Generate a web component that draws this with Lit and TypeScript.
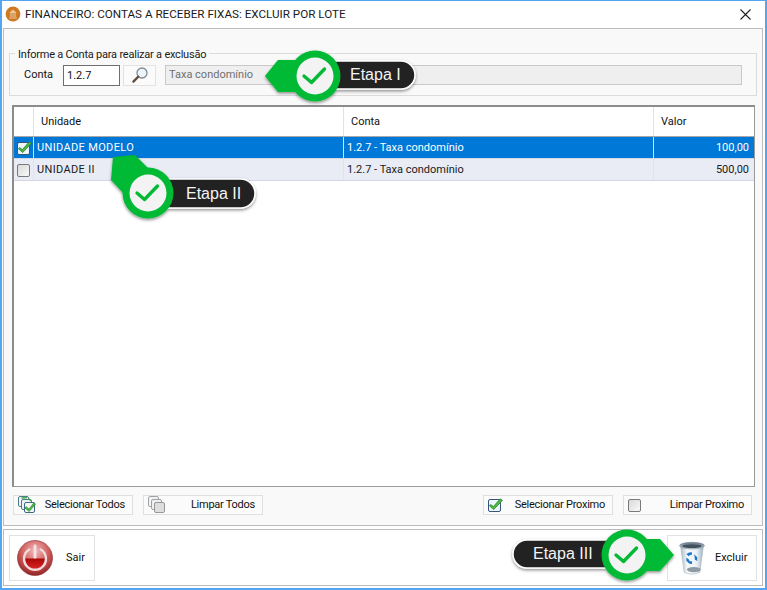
import { LitElement, html, css, svg } from "lit";
import { customElement } from "lit/decorators.js";

const checkIcon = (checked: boolean) => html`<svg class="cb" width="16" height="16" viewBox="0 0 16 16">
  <defs><linearGradient id="cbg" x1="0" y1="0" x2="1" y2="1"><stop offset="0" stop-color="#d8d8d8"/><stop offset="1" stop-color="#fafafa"/></linearGradient></defs>
  <rect x="1.5" y="2.5" width="12" height="12" rx="1.5" fill="${checked ? "#eef5fb" : "url(#cbg)"}" stroke="${checked ? "#34557c" : "#77797c"}"/>
  ${checked ? svg`<path d="M3.6 7.5 L6.4 9.6 L13.2 1.8 L15.4 3.4 L6.7 12.6 L2.4 8.8 Z" fill="#4fb83f" stroke="#1e7a22" stroke-width=".7"/>` : ""}
</svg>`;

const stackIcon = (checked: boolean) => html`<svg width="18" height="18" viewBox="0 0 18 18">
  <rect x="0.5" y="0.5" width="10" height="10" rx="1.5" fill="#f1f4f6" stroke="${checked ? "#4b7b91" : "#a2a2a2"}"/>
  <rect x="3.5" y="3.5" width="10" height="10" rx="1.5" fill="#eef1f3" stroke="${checked ? "#4b7b91" : "#a2a2a2"}"/>
  <rect x="6.5" y="6.5" width="10" height="10" rx="1.5" fill="${checked ? "#f4f8fb" : "#dedede"}" stroke="${checked ? "#3e6a85" : "#969696"}"/>
  ${checked ? svg`
    <path d="M8 10.5 L11 13 L16 6.6 L17.6 8 L11.2 15.6 L6.8 12 Z" fill="#4fb83f" stroke="#1e7a22" stroke-width=".5"/>
    <path d="M3.5 2 L9 1.6 M10.5 2.4 L13 4.8" stroke="#3da639" stroke-width="1.4" fill="none"/>` : ""}
</svg>`;

const powerIcon = html`<svg width="36" height="36" viewBox="0 0 36 36">
  <defs>
    <radialGradient id="pw" cx=".5" cy=".3" r=".8"><stop offset="0" stop-color="#f3bcbc"/><stop offset=".5" stop-color="#cf5a5a"/><stop offset="1" stop-color="#7c1414"/></radialGradient>
    <linearGradient id="pwb" x1="0" y1="0" x2="0" y2="1"><stop offset="0" stop-color="#a80808"/><stop offset="1" stop-color="#e42a2a"/></linearGradient>
  </defs>
  <circle cx="18" cy="18" r="17.5" fill="url(#pw)" stroke="#8b2a2a" stroke-width=".6"/>
  <path d="M5.6 18.5 H30.4 A12.4 12.4 0 0 1 5.6 18.5 Z" fill="url(#pwb)"/>
  <path d="M12.2 9.4 A11 11 0 1 0 23.8 9.4" fill="none" stroke="#efdcdc" stroke-width="2.4" stroke-linecap="round"/>
  <rect x="16.6" y="4.6" width="2.8" height="14" rx="1.4" fill="#f1e4e4"/>
</svg>`;

const trashIcon = html`<svg width="28" height="35" viewBox="0 0 30 38">
  <defs>
    <linearGradient id="tb" x1="0" y1="0" x2="1" y2="0"><stop offset="0" stop-color="#a9bac8"/><stop offset=".3" stop-color="#f5f9fb"/><stop offset=".7" stop-color="#eaf1f6"/><stop offset="1" stop-color="#9db0bf"/></linearGradient>
    <linearGradient id="tr" x1="0" y1="0" x2="0" y2="1"><stop offset="0" stop-color="#5c6d7b"/><stop offset="1" stop-color="#c9d5de"/></linearGradient>
  </defs>
  <path d="M2.5 5 L6.5 34 Q15 38 23.5 34 L27.5 5 Z" fill="url(#tb)" stroke="#a3b3c0" stroke-width=".6"/>
  <ellipse cx="15" cy="5" rx="13.5" ry="3.6" fill="url(#tr)" stroke="#7c8f9e" stroke-width=".7"/>
  <ellipse cx="15" cy="5.6" rx="10.5" ry="2" fill="#40505c"/>
  <ellipse cx="17" cy="31" rx="7.5" ry="2.8" fill="#8f9aa3"/>
  <path d="M9 14 A7 7 0 0 1 15 12.4 L15 15 A4 4 0 0 0 11.4 16.6 Z M17.4 14.4 L20.6 17.6 L20.6 21.6 L18 20 L18 17.8 Z M12.4 24.8 L9 21.6 L8.8 18.2 L11.2 19.6 L12.6 22 L15 22 L15 25 Z" fill="#1f74c9"/>
</svg>`;

const searchIcon = html`<svg width="18" height="18" viewBox="0 0 18 18">
  <circle cx="11" cy="7" r="5" fill="#eef5fa" stroke="#7f8c96" stroke-width="1.3"/>
  <path d="M7.2 10.8 L2.4 15.6" stroke="#5d4a3a" stroke-width="2.3" stroke-linecap="round"/>
</svg>`;

const appIcon = html`<svg width="16" height="16" viewBox="0 0 16 16">
  <circle cx="8" cy="8" r="7.4" fill="#cf7a22"/>
  <path d="M4.8 6.6 L8 3.6 L11.2 6.6 V7.4 H4.8 Z M5.4 8 H10.6 V11 H5.4 Z M4.2 11.4 H11.8 V12.6 H4.2 Z" fill="#ecc79c"/>
  <path d="M7 8 V11 M9 8 V11" stroke="#b96d1e" stroke-width=".8"/>
</svg>`;

@customElement("app-callout")
class AppCallout extends LitElement {
  static properties = { label: {}, kind: {} };
  label = "";
  kind = "i";
  static styles = css`
    :host { position: absolute; display: block; left: 0; top: 0; width: 767px; height: 590px; pointer-events: none; }
    svg { position: absolute; left: 0; top: 0; }
    .t { position: absolute; font: 16px "Liberation Sans", sans-serif; color: #f4f4f4; line-height: 20px; white-space: nowrap; }
    .i { left: 350px; top: 65px; }
    .ii { left: 186px; top: 184px; }
    .iii { left: 533px; top: 544px; }
  `;
  render() {
    const spec: Record<string, { pill: number[]; c: number[]; arrow: string }> = {
      i: { pill: [300, 61, 115, 28], c: [315, 76], arrow: "265,76 278,60 310,60 310,92 278,92" },
      ii: { pill: [140, 179, 115, 29], c: [148, 193], arrow: "113,157 135,155 160,180 125,195 111,180" },
      iii: { pill: [513, 540, 115, 28], c: [627, 555], arrow: "674,555 660,539 625,539 625,571 660,571" },
    };
    const s = spec[this.kind];
    const [x, y, w, h] = s.pill;
    const [cx, cy] = s.c;
    return html`<svg width="767" height="590" viewBox="0 0 767 590">
      <defs><filter id="sh" x="-20%" y="-30%" width="140%" height="170%"><feDropShadow dx="0" dy="1.5" stdDeviation="1.5" flood-color="#000" flood-opacity=".45"/></filter></defs>
      <g filter="url(#sh)">
        <rect x="${x}" y="${y}" width="${w}" height="${h}" rx="${h / 2}" fill="#232323" stroke="#fff" stroke-width="1.5"/>
        <polygon points="${s.arrow}" fill="#04b934"/>
        <circle cx="${cx}" cy="${cy}" r="25.5" fill="#04b934"/>
      </g>
      <circle cx="${cx}" cy="${cy}" r="18.5" fill="#f3f3f3"/>
      <path d="M${cx - 11} ${cy} L${cx - 3.5} ${cy + 6.5} L${cx + 9.5} ${cy - 7}" fill="none" stroke="#04b934" stroke-width="3.4" stroke-linecap="round" stroke-linejoin="round"/>
    </svg><span class="t ${this.kind}">${this.label}</span>`;
  }
}

@customElement("app-root")
class AppRoot extends LitElement {
  static styles = css`
    :host { display: block; width: 767px; height: 590px; position: relative; overflow: hidden; background: #fff; font: 11px/16px Roboto, "Liberation Sans", sans-serif; color: #111; }
    .win { box-sizing: border-box; width: 767px; height: 590px; border: 1px solid #55a6f2; border-width: 1px 2px 2px 2px; display: flex; flex-direction: column; background: #fff; }
    .title { height: 26px; flex: none; display: flex; align-items: center; gap: 4px; padding: 0 0 0 3px; color: #1a1a1a; font-size: 11.67px; }
    .x { margin-left: auto; width: 13px; height: 13px; margin-right: 13px; }
    .main { margin: 1px 2px 0 1px; height: 498px; box-sizing: border-box; border: 1px solid #bcbcbc; background: #f9f9f9; padding: 15px 5px 0 5px; display: flex; flex-direction: column; flex: none; }
    fieldset { margin: 0; padding: 0 14px 0 14px; height: 52px; box-sizing: border-box; border: 1px solid #dcdcdc; flex: none; display: flex; }
    legend { padding: 4px 3px 0; margin-left: -9px; line-height: 14px; color: #1a1a1a; letter-spacing: -0.22px; }
    .frow { display: flex; align-items: center; height: 20px; margin-top: 3px; width: 100%; }
    .lbl { width: 39px; flex: none; }
    .inp { width: 57px; height: 21px; box-sizing: border-box; border: 1px solid #6e6e6e; background: #fff; padding: 1px 3px; flex: none; line-height: 17px; }
    .sbtn { width: 33px; height: 21px; box-sizing: border-box; margin-left: 3px; border: 1px solid #e2e2e2; background: #fbfbfb; display: flex; align-items: center; justify-content: center; flex: none; }
    .ro { flex: 1; margin-left: 9px; height: 20px; box-sizing: border-box; border: 1px solid #c9c9c9; background: #efefef; color: #6f6f6f; padding: 1px 3px; line-height: 16px; }
    .grid { margin: 9px 2px 0 3px; height: 382px; box-sizing: border-box; border: 1px solid #8f8f8f; border-width: 2px 1px 1px 2px; border-color: #8c8c8c #9a9a9a #9a9a9a #8c8c8c; background: #fff; flex: none; }
    .r { display: grid; grid-template-columns: 20px 310px 310px 1fr; box-sizing: border-box; }
    .r > div { box-sizing: border-box; border-right: 1px solid #e3e3e3; display: flex; align-items: center; padding: 0 3px; }
    .r > div:last-child { border-right: none; }
    .head { height: 30px; border-bottom: 1px solid #a8a8a8; }
    .head > div { padding: 0 7px; }
    .row { height: 22px; border-bottom: 1px solid #d4d8e2; background: #e9ecf5; color: #1a1a1a; }
    .row.sel { background: #0078d7; color: #fff; }
    .row.sel > div { border-right-color: #cfe3f5; }
    .row > .cb { padding: 0 0 0 2px; }
    .row > .txt { padding-top: 1px; }
    .unit { letter-spacing: 0.35px; }
    .num { justify-content: flex-end; padding-right: 5px !important; }
    .acts { display: flex; margin: 8px 5px 0 4px; height: 20px; flex: none; }
    .b { box-sizing: border-box; height: 20px; border: 1px solid #dfdfdf; background: #fbfbfb; display: flex; align-items: center; padding: 0 7px 0 4px; flex: none; letter-spacing: -0.25px; }
    .b span { flex: 1; text-align: right; }
    .b svg { flex: none; }
    .b svg.cb { margin-left: -1px; }
    .w119 { width: 120px; margin-right: 10px; }
    .w120 { width: 120px; }
    .w130 { width: 130px; margin-left: auto; margin-right: 10px; }
    .w129 { width: 129px; }
    .foot { margin: 3px 2px 0 1px; height: 57px; box-sizing: border-box; border: 1px solid #bcbcbc; flex: none; padding: 5px 5px 0 5px; display: flex; justify-content: space-between; background: #fff; }
    .big { box-sizing: border-box; height: 46px; border: 1px solid #e2e2e2; background: #fff; display: flex; align-items: center; }
    .sair { width: 86px; padding-left: 7px; gap: 13px; }
    .excluir { width: 90px; padding-left: 10px; gap: 9px; }
  `;
  render() {
    return html`<div class="win">
      <div class="title">${appIcon}<span>FINANCEIRO: CONTAS A RECEBER FIXAS: EXCLUIR POR LOTE</span>
        <svg class="x" viewBox="0 0 13 13"><path d="M1.5 1.5 L11.5 11.5 M11.5 1.5 L1.5 11.5" stroke="#222" stroke-width="1.1"/></svg>
      </div>
      <div class="main">
        <fieldset><legend>Informe a Conta para realizar a exclusão</legend>
          <div class="frow"><span class="lbl">Conta</span><div class="inp">1.2.7</div><div class="sbtn">${searchIcon}</div><div class="ro">Taxa condomínio</div></div>
        </fieldset>
        <div class="grid">
          <div class="r head"><div></div><div>Unidade</div><div>Conta</div><div>Valor</div></div>
          <div class="r row sel"><div class="cb">${checkIcon(true)}</div><div class="unit txt">UNIDADE MODELO</div><div class="txt">1.2.7 - Taxa condomínio</div><div class="num txt">100,00</div></div>
          <div class="r row"><div class="cb">${checkIcon(false)}</div><div class="unit txt">UNIDADE II</div><div class="txt">1.2.7 - Taxa condomínio</div><div class="num txt">500,00</div></div>
        </div>
        <div class="acts">
          <div class="b w119">${stackIcon(true)}<span>Selecionar Todos</span></div>
          <div class="b w120">${stackIcon(false)}<span>Limpar Todos</span></div>
          <div class="b w130">${checkIcon(true)}<span>Selecionar Proximo</span></div>
          <div class="b w129">${checkIcon(false)}<span>Limpar Proximo</span></div>
        </div>
      </div>
      <div class="foot">
        <div class="big sair">${powerIcon}<span>Sair</span></div>
        <div class="big excluir">${trashIcon}<span>Excluir</span></div>
      </div>
    </div>
    <app-callout kind="i" label="Etapa I"></app-callout>
    <app-callout kind="ii" label="Etapa II"></app-callout>
    <app-callout kind="iii" label="Etapa III"></app-callout>`;
  }
}
